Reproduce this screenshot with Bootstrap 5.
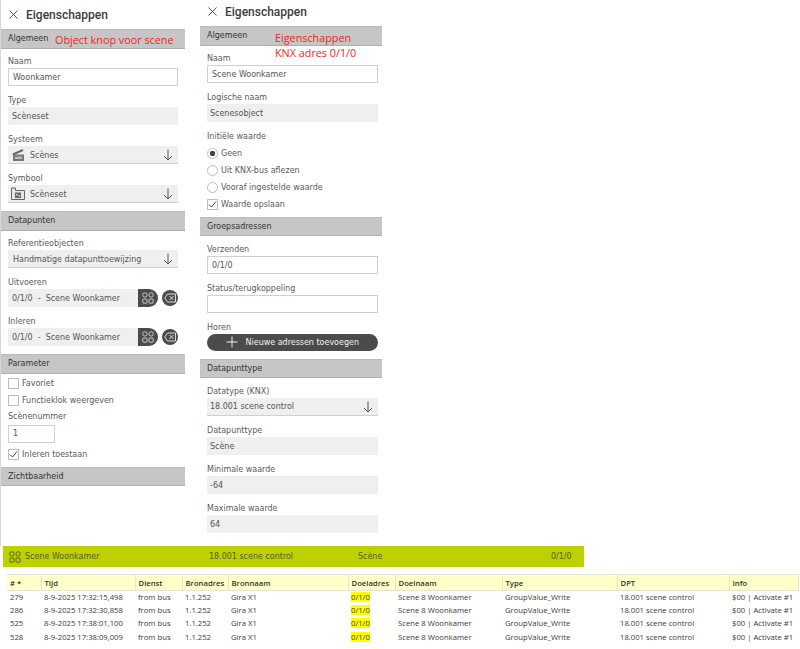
<!DOCTYPE html>
<html lang="nl">
<head>
<meta charset="utf-8">
<title>Eigenschappen</title>
<link href="https://cdn.jsdelivr.net/npm/bootstrap@5.3.0/dist/css/bootstrap.min.css" rel="stylesheet">
<style>
html,body{height:649px;overflow:hidden;background:#fff}
body{font-family:"DejaVu Sans Condensed","DejaVu Sans","Liberation Sans",sans-serif;font-size:8.9px;color:#555;line-height:14px}
.top-area{height:546px}
.pane{position:relative}
.pane-a{width:185px;border-left:1px solid #d6d6d6;margin-right:15px}
.pane-b{width:182px}
.ttl{font-family:"Roboto","Liberation Sans",sans-serif;font-weight:500;font-size:12px;color:#3c3c3c}
.ttl-a{height:29px;padding-left:8px}
.ttl-b{height:26px;padding-left:8px;padding-bottom:3px}
.x-ico{margin-right:8px}
.band{height:19.5px;background:#c6c6c6;border-top:1px solid #bcbcbc;border-bottom:1px solid #aeaeae;color:#333;padding-left:7px;line-height:17px}
.sect{padding:5.5px 7px 1px 7px}
.pane-b .sect{padding:5.5px 4.5px 0 7px}
.sect-par{padding-top:1.5px;padding-bottom:3.5px}
.rad-grp{padding-top:1.5px}
.fld{margin-bottom:7px}
.lab{height:14px;line-height:14px;color:#5a5a5a}
.ctl{height:18px;line-height:16px;padding:0 3px 0 3px}
.ctl-in{border:1px solid #cfcfcf;background:#fff;padding-left:4px;color:#555}
.ctl-ro{background:#efefef;padding-left:4px;line-height:18px}
.ctl-sel{background:#efefef;border-bottom:1px solid #cfcfcf;padding:1px 5px 0 5px;line-height:17px}
.pane-b .ctl-sel,.pane-b .ctl-ro{padding-left:3px}
.sel-ico{width:14px;height:14px;margin:0 5px 0 -2px;flex:none}
.arr{width:10px;height:12px;flex:none}
.lnk{flex:1;min-width:0}
.act-a{width:20px;height:18px;background:#4b4b4b;border-radius:0 9px 9px 0;flex:none}
.act-b{width:16px;height:16px;margin-left:4px;background:#4b4b4b;border-radius:50%;flex:none}
.chk{height:17px;line-height:17px;color:#5a5a5a}
.box{width:11px;height:11px;border:1px solid #bdbdbd;margin-right:3px;background:#fff;flex:none}
.rad{width:11px;height:11px;border:1px solid #bdbdbd;border-radius:50%;margin-right:3px;flex:none}
.rad-on{background:radial-gradient(circle,#444 0 2.5px,#fff 3px)}
.num{width:47px;height:17.5px;line-height:15px;margin:2px 0 3.5px}
.pill{height:17px;background:#4b4b4b;border-radius:9px;color:#f2f2f2;line-height:17px}
.gap-b{margin-top:4px}
.gap-c{margin-top:8px}
.gap-d{margin-top:7px}
.note{position:absolute;color:#f01f24;font-family:"Open Sans","Noto Sans",sans-serif;font-size:10.8px;line-height:15px;white-space:nowrap}
.note-a{left:54px;top:32px}
.note-b{left:75px;top:30px}
.gbar{margin-left:3px;width:581px;height:21px;background:#bfd000;color:#56610b;line-height:21px;position:relative}
.g1{width:206px;padding-left:6px}
.g2{width:149px}
.g3{width:193px}
.wrap-t{margin:7px 2px 0 7px;width:791px}
.tbl{table-layout:fixed;width:791px;font-family:"Open Sans","Noto Sans",sans-serif;font-size:7.7px;margin:0;color:#3a3a3a}
.tbl th{background:#ffffc9;border:1px solid #e4e4dc;border-width:1px 1px 1px 0;font-weight:600;color:#333;height:16px;padding:0 3px;line-height:14px;white-space:nowrap}
.tbl td{border:0;padding:0 3px;height:13.2px;line-height:13.2px;white-space:nowrap;background:#fff;color:#3a3a3a;box-shadow:none}
.hl{background:#ffff00}
</style>
</head>
<body>
<div class="top-area d-flex">
  <div class="pane pane-a">
    <div class="ttl ttl-a d-flex align-items-center">
      <svg width="9" height="9" viewBox="0 0 9 9" class="x-ico" fill="none" stroke="#555"><path d="M.5 .5l8 8M8.5 .5l-8 8"/></svg>Eigenschappen
    </div>
    <div class="band">Algemeen</div>
    <div class="note note-a">Object knop voor scene</div>
    <div class="sect">
      <div class="fld"><div class="lab">Naam</div><div class="ctl ctl-in">Woonkamer</div></div>
      <div class="fld"><div class="lab">Type</div><div class="ctl ctl-ro">Scèneset</div></div>
      <div class="fld"><div class="lab">Systeem</div>
        <div class="ctl ctl-sel d-flex align-items-center">
          <svg class="sel-ico" viewBox="0 0 14 14"><path d="M2 6.500h11V13H2z" fill="#777"/><path d="M1.500 5.500L11.500 1l.8 2-10 4.500z" fill="#666"/><path d="M4 8.500h7v2.500H4z" fill="#bbb"/></svg>
          <span class="lnk">Scènes</span>
          <svg class="arr" viewBox="0 0 10 12" fill="none" stroke="#555"><path d="M5 .5v10.500M1 7l4 4 4-4"/></svg>
        </div></div>
      <div class="fld"><div class="lab">Symbool</div>
        <div class="ctl ctl-sel d-flex align-items-center">
          <svg class="sel-ico" viewBox="0 0 14 14"><path d="M.5 3.500V1h4v2.500h9v9H.5z" fill="#e6e6e6" stroke="#666"/><path d="M4 5.500h6v5.500H4z" fill="#6a6a6a"/><path d="M5 7h1.500v1.500H5zM7.500 8H9v1.500H7.500z" fill="#ddd"/></svg>
          <span class="lnk">Scèneset</span>
          <svg class="arr" viewBox="0 0 10 12" fill="none" stroke="#555"><path d="M5 .5v10.500M1 7l4 4 4-4"/></svg>
        </div></div>
    </div>
    <div class="band">Datapunten</div>
    <div class="sect">
      <div class="fld"><div class="lab">Referentieobjecten</div>
        <div class="ctl ctl-sel d-flex align-items-center">
          <span class="lnk">Handmatige datapunttoewijzing</span>
          <svg class="arr" viewBox="0 0 10 12" fill="none" stroke="#555"><path d="M5 .5v10.500M1 7l4 4 4-4"/></svg>
        </div></div>
      <div class="fld"><div class="lab">Uitvoeren</div>
        <div class="d-flex">
          <div class="ctl ctl-ro lnk">0/1/0 &nbsp;-&nbsp; Scene Woonkamer</div>
          <div class="act-a d-flex align-items-center justify-content-center"><svg width="12" height="12" viewBox="0 0 12 12" fill="none" stroke="#ccc"><rect x=".8" y=".8" width="4.200" height="4.200" rx="1.800"/><rect x="7" y=".8" width="4.200" height="4.200" rx="1.800"/><rect x=".8" y="7" width="4.200" height="4.200" rx=".8"/><rect x="7" y="7" width="4.200" height="4.200" rx=".8"/></svg></div>
          <div class="act-b d-flex align-items-center justify-content-center align-self-center"><svg width="12" height="10" viewBox="0 0 12 10" fill="none" stroke="#ddd"><path d="M3.500 1h8v8h-8L.7 5zM5.500 3l4 4M9.500 3l-4 4"/></svg></div>
        </div></div>
      <div class="fld mb-0"><div class="lab">Inleren</div>
        <div class="d-flex">
          <div class="ctl ctl-ro lnk">0/1/0 &nbsp;-&nbsp; Scene Woonkamer</div>
          <div class="act-a d-flex align-items-center justify-content-center"><svg width="12" height="12" viewBox="0 0 12 12" fill="none" stroke="#ccc"><rect x=".8" y=".8" width="4.200" height="4.200" rx="1.800"/><rect x="7" y=".8" width="4.200" height="4.200" rx="1.800"/><rect x=".8" y="7" width="4.200" height="4.200" rx=".8"/><rect x="7" y="7" width="4.200" height="4.200" rx=".8"/></svg></div>
          <div class="act-b d-flex align-items-center justify-content-center align-self-center"><svg width="12" height="10" viewBox="0 0 12 10" fill="none" stroke="#ddd"><path d="M3.500 1h8v8h-8L.7 5zM5.500 3l4 4M9.500 3l-4 4"/></svg></div>
        </div></div>
    </div>
    <div class="band gap-d">Parameter</div>
    <div class="sect sect-par">
      <div class="chk d-flex align-items-center"><span class="box"></span>Favoriet</div>
      <div class="chk d-flex align-items-center"><span class="box"></span>Functieklok weergeven</div>
      <div class="lab">Scènenummer</div>
      <div class="ctl ctl-in num">1</div>
      <div class="chk d-flex align-items-center"><span class="box d-flex"><svg width="9" height="9" viewBox="0 0 9 9" fill="none" stroke="#444"><path d="M1 4.500l2.500 2.500L8 1.500"/></svg></span>Inleren toestaan</div>
    </div>
    <div class="band">Zichtbaarheid</div>
  </div>

  <div class="pane pane-b">
    <div class="ttl ttl-b d-flex align-items-center">
      <svg width="9" height="9" viewBox="0 0 9 9" class="x-ico" fill="none" stroke="#555"><path d="M.5 .5l8 8M8.500 .5l-8 8"/></svg>Eigenschappen
    </div>
    <div class="band">Algemeen</div>
    <div class="note note-b">Eigenschappen<br>KNX adres 0/1/0</div>
    <div class="sect">
      <div class="fld"><div class="lab">Naam</div><div class="ctl ctl-in">Scene Woonkamer</div></div>
      <div class="fld"><div class="lab">Logische naam</div><div class="ctl ctl-ro">Scenesobject</div></div>
      <div class="lab">Initiële waarde</div>
      <div class="rad-grp">
      <div class="chk d-flex align-items-center"><span class="rad rad-on"></span>Geen</div>
      <div class="chk d-flex align-items-center"><span class="rad"></span>Uit KNX-bus aflezen</div>
      <div class="chk d-flex align-items-center"><span class="rad"></span>Vooraf ingestelde waarde</div>
      <div class="chk d-flex align-items-center"><span class="box d-flex"><svg width="9" height="9" viewBox="0 0 9 9" fill="none" stroke="#444"><path d="M1 4.500l2.500 2.500L8 1.500"/></svg></span>Waarde opslaan</div>
      </div>
    </div>
    <div class="band gap-b">Groepsadressen</div>
    <div class="sect">
      <div class="fld"><div class="lab">Verzenden</div><div class="ctl ctl-in">0/1/0</div></div>
      <div class="fld"><div class="lab">Status/terugkoppeling</div><div class="ctl ctl-in"></div></div>
      <div class="lab">Horen</div>
      <div class="pill d-flex align-items-center justify-content-center">
        <svg width="12" height="12" viewBox="0 0 12 12" class="me-2" fill="none" stroke="#eee"><path d="M6 .5v11M.5 6h11"/></svg>Nieuwe adressen toevoegen
      </div>
    </div>
    <div class="band gap-c">Datapunttype</div>
    <div class="sect">
      <div class="fld"><div class="lab">Datatype (KNX)</div>
        <div class="ctl ctl-sel d-flex align-items-center">
          <span class="lnk">18.001 scene control</span>
          <svg class="arr" viewBox="0 0 10 12" fill="none" stroke="#555"><path d="M5 .5v10.500M1 7l4 4 4-4"/></svg>
        </div></div>
      <div class="fld"><div class="lab">Datapunttype</div><div class="ctl ctl-ro">Scène</div></div>
      <div class="fld"><div class="lab">Minimale waarde</div><div class="ctl ctl-ro">-64</div></div>
      <div class="fld mb-0"><div class="lab">Maximale waarde</div><div class="ctl ctl-ro">64</div></div>
    </div>
  </div>
</div>

<div class="gbar d-flex align-items-center">
  <div class="g1 d-flex align-items-center">
    <svg width="12" height="12" viewBox="0 0 12 12" class="me-1" fill="none" stroke="#56610b"><rect x=".8" y=".8" width="4.200" height="4.200" rx="1.800"/><rect x="7" y=".8" width="4.200" height="4.200" rx="1.800"/><rect x=".8" y="7" width="4.200" height="4.200" rx=".8"/><rect x="7" y="7" width="4.200" height="4.200" rx=".8"/></svg>
    Scene Woonkamer</div>
  <div class="g2">18.001 scene control</div>
  <div class="g3">Scène</div>
  <div>0/1/0</div>
</div>

<div class="wrap-t">
<table class="table tbl">
  <colgroup><col style="width:34px"><col style="width:94px"><col style="width:47px"><col style="width:46px"><col style="width:120px"><col style="width:47px"><col style="width:107px"><col style="width:115px"><col style="width:112px"><col style="width:69px"></colgroup>
  <thead><tr><th>#&nbsp;*</th><th>Tijd</th><th>Dienst</th><th>Bronadres</th><th>Bronnaam</th><th>Doeladres</th><th>Doelnaam</th><th>Type</th><th>DPT</th><th>Info</th></tr></thead>
  <tbody>
    <tr><td>279</td><td>8-9-2025 17:32:15,498</td><td>from bus</td><td>1.1.252</td><td>Gira X1</td><td><span class="hl">0/1/0</span></td><td>Scene 8 Woonkamer</td><td>GroupValue_Write</td><td>18.001 scene control</td><td>$00 | Activate #1</td></tr>
    <tr><td>286</td><td>8-9-2025 17:32:30,858</td><td>from bus</td><td>1.1.252</td><td>Gira X1</td><td><span class="hl">0/1/0</span></td><td>Scene 8 Woonkamer</td><td>GroupValue_Write</td><td>18.001 scene control</td><td>$00 | Activate #1</td></tr>
    <tr><td>525</td><td>8-9-2025 17:38:01,100</td><td>from bus</td><td>1.1.252</td><td>Gira X1</td><td><span class="hl">0/1/0</span></td><td>Scene 8 Woonkamer</td><td>GroupValue_Write</td><td>18.001 scene control</td><td>$00 | Activate #1</td></tr>
    <tr><td>528</td><td>8-9-2025 17:38:09,009</td><td>from bus</td><td>1.1.252</td><td>Gira X1</td><td><span class="hl">0/1/0</span></td><td>Scene 8 Woonkamer</td><td>GroupValue_Write</td><td>18.001 scene control</td><td>$00 | Activate #1</td></tr>
  </tbody>
</table>
</div>
</body>
</html>
